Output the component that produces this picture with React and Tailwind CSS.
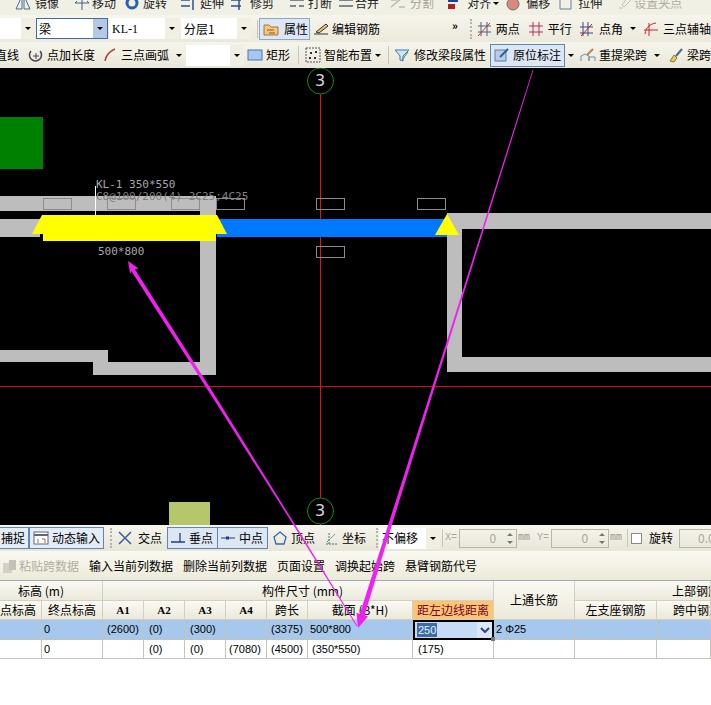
const Ico = ({ children, className = "" }) => (
  <svg viewBox="0 0 16 16" className={`w-4 h-4 shrink-0 ${className}`} fill="none">
    {children}
  </svg>
);

const Arrow = () => (
  <span className="ml-[7px] w-0 h-0 shrink-0 border-x-[3px] border-x-transparent border-t-[3px] border-t-black"></span>
);

const Sep = ({ className = "" }) => <span className={`w-px h-[18px] bg-[#c8c6b6] shrink-0 ${className}`}></span>;

const Grip = ({ className = "" }) => (
  <span className={`w-[2px] h-[20px] shrink-0 border-l-2 border-dotted border-[#b5b3a5] ${className}`}></span>
);

const Combo = ({ className = "", children }) => (
  <div className={`h-[21px] bg-white flex items-center justify-between shrink-0 pl-[3px] ${className}`}>
    <span>{children}</span>
    <span className="w-[14px] h-full bg-[#f1efe4] flex items-center justify-center">
      <span className="w-0 h-0 border-x-[3px] border-x-transparent border-t-[3px] border-t-black"></span>
    </span>
  </div>
);

const Spin = ({ className = "", value }) => (
  <div className={`h-[19px] border border-[#b8b6a6] flex items-center justify-end text-[#a9a798] shrink-0 ${className}`}>
    <span className="mr-[8px]">{value}</span>
    <span className="w-[12px] flex flex-col items-center gap-[5px]">
      <span className="w-0 h-0 border-x-[3px] border-x-transparent border-b-[3px] border-b-[#777]"></span>
      <span className="w-0 h-0 border-x-[3px] border-x-transparent border-t-[3px] border-t-[#777]"></span>
    </span>
  </div>
);

const Cell = ({ className = "", children }) => (
  <div className={`border-r border-b border-[#c4c4bc] flex items-center overflow-hidden whitespace-nowrap ${className}`}>
    {children}
  </div>
);

const Head = ({ className = "", children }) => (
  <div className={`border-r border-b border-[#d2d0c2] bg-gradient-to-b from-[#fafaf3] to-[#ebe9da] flex items-center justify-center overflow-hidden whitespace-nowrap ${className}`}>
    {children}
  </div>
);

const Beam = ({ x, y }) => <rect x={x} y={y} width="28" height="11" fill="none" stroke="#8c8c8c" />;

const Canvas = () => (
  <div className="relative h-[457px] bg-black shrink-0 overflow-hidden font-['DejaVu_Sans_Mono',monospace] text-[11px]">
    <svg viewBox="0 68 711 457" className="w-[711px] h-[457px] block">
      <rect x="0" y="117" width="43" height="52" fill="#008000" />
      <rect x="169" y="502" width="41" height="23" fill="#b5c76a" />
      <g fill="#bdbdbd">
        <rect x="0" y="196" width="216" height="15" />
        <rect x="200" y="211" width="16" height="164" />
        <rect x="0" y="219" width="40" height="18" />
        <rect x="0" y="350" width="108" height="12" />
        <rect x="93" y="362" width="123" height="13" />
        <rect x="447" y="213" width="15" height="159" />
        <rect x="447" y="213" width="264" height="16" />
        <rect x="447" y="357" width="264" height="15" />
      </g>
      <line x1="320.5" y1="68" x2="320.5" y2="525" stroke="#e01020" />
      <line x1="0" y1="386.5" x2="711" y2="386.5" stroke="#d01010" />
      <rect x="217" y="219" width="230" height="18" fill="#0078ff" />
      <polygon points="42,215 217,215 227,234 216,234 216,241 43,241 43,234 32,234" fill="#ffff00" />
      <polygon points="447,214 459,235 435,235" fill="#ffff00" />
      <line x1="95.5" y1="186" x2="95.5" y2="215" stroke="#fff" />
      <Beam x={43.5} y={198.5} />
      <Beam x={107.5} y={198.5} />
      <Beam x={171.5} y={198.5} />
      <Beam x={216.5} y={198.5} />
      <Beam x={316.5} y={198.5} />
      <Beam x={417.5} y={198.5} />
      <Beam x={316.5} y={246.5} />
      <circle cx="320.5" cy="81" r="13" stroke="#128a12" />
      <circle cx="320.5" cy="511" r="13" stroke="#128a12" />
    </svg>
    <span className="absolute left-[315px] top-[5px] text-[16px] font-['DejaVu_Sans',sans-serif] text-[#d8d8d8]">3</span>
    <span className="absolute left-[315px] top-[435px] text-[16px] font-['DejaVu_Sans',sans-serif] text-[#d8d8d8]">3</span>
    <span className="absolute left-[96px] top-[111px] text-[#a8a8a8] whitespace-nowrap">KL-1 350*550</span>
    <span className="absolute left-[96px] top-[123px] text-[#808080] whitespace-nowrap">C8@100/200(4) 2C25;4C25</span>
    <span className="absolute left-[98px] top-[178px] text-[#a8a8a8] whitespace-nowrap">500*800</span>
  </div>
);

export default function App() {
  return (
    <div className="relative w-[711px] h-[705px] overflow-hidden bg-white flex flex-col text-[12px] leading-none text-black font-['Noto_Sans_CJK_SC','Liberation_Sans',sans-serif]">
      {/* top toolbars */}
      <div className="h-[15px] shrink-0 bg-[#f1f0e5] overflow-hidden">
        <div className="h-[11px] flex items-end whitespace-nowrap">
          <div className="flex items-center h-[16px] text-[#222]">
            <Ico className="ml-[15px]"><path d="M7 1 1 14h6zM9 1l6 13H9z" stroke="#4a6a90" /></Ico>
            <span className="ml-[4px]">镜像</span>
            <Ico className="ml-[15px]"><path d="M8 1v14M1 8h14M8 1 6 3M8 1l2 2M1 8l2-2M15 8l-2-2" stroke="#3d5f8a" /></Ico>
            <span className="ml-[2px]">移动</span>
            <Ico className="ml-[8px]"><circle cx="8" cy="8" r="5" stroke="#2a5fb0" strokeWidth="3" /></Ico>
            <span className="ml-[3px]">旋转</span>
            <Ico className="ml-[13px]"><path d="M1 5h9M1 11h9M13 1v14" stroke="#2f4f8f" strokeWidth="1.5" /></Ico>
            <span className="ml-[4px]">延伸</span>
            <Ico className="ml-[6px]"><path d="M1 5h10M1 11h10M9 1v14" stroke="#2f4f8f" strokeWidth="1.5" /></Ico>
            <span className="ml-[4px]">修剪</span>
            <Ico className="ml-[15px]"><path d="M1 5h14M1 11h6M10 11h5M3 1v4M13 1v4" stroke="#55667a" strokeWidth="1.5" /></Ico>
            <span className="ml-[3px]">打断</span>
            <Ico className="ml-[6px]"><path d="M1 5h14M1 11h14M5 1l3 4 3-4" stroke="#55667a" strokeWidth="1.5" /></Ico>
            <span className="ml-[1px]">合并</span>
            <Ico className="ml-[11px]"><path d="M1 12 12 3M1 5h6M9 12h6" stroke="#bcbab0" strokeWidth="1.5" /></Ico>
            <span className="ml-[4px] text-[#a8a69a]">分割</span>
            <Ico className="ml-[12px]"><rect x="2" y="2" width="10" height="5" fill="#1c3fa8" /><rect x="2" y="9" width="7" height="5" fill="#b02020" /></Ico>
            <span className="ml-[5px]">对齐</span>
            <span className="ml-[2px] w-0 h-0 border-x-[3px] border-x-transparent border-t-[3px] border-t-black"></span>
            <Ico className="ml-[6px]"><circle cx="8" cy="9" r="6" fill="#d98a80" stroke="#707070" /></Ico>
            <span className="ml-[5px]">偏移</span>
            <Ico className="ml-[8px]"><path d="M2 14V2h8l3 3v9z" stroke="#6a7f98" /></Ico>
            <span className="ml-[4px]">拉伸</span>
            <Ico className="ml-[15px]"><path d="M2 13h4M11 2l3 3-7 7-2-2z" stroke="#c0beb4" /></Ico>
            <span className="ml-[1px] text-[#b0aea2]">设置夹点</span>
          </div>
        </div>
      </div>

      <div className="h-[27px] shrink-0 bg-gradient-to-b from-[#f6f5ec] to-[#ebe9db] flex items-center whitespace-nowrap">
        <Combo className="w-[35px]"></Combo>
        <div className="ml-[1px] w-[72px] h-[21px] bg-white border border-[#3a6ea5] flex items-center justify-between pl-[2px] shrink-0">
          <span>梁</span>
          <span className="w-[14px] h-full bg-[#b4c8e4] flex items-center justify-center">
            <span className="w-0 h-0 border-x-[3px] border-x-transparent border-t-[3px] border-t-black"></span>
          </span>
        </div>
        <Combo className="ml-[1px] w-[70px] font-['Liberation_Serif',serif]">KL-1</Combo>
        <Combo className="ml-[2px] w-[70px]">分层1</Combo>
        <Sep className="ml-[6px]" />
        <div className="ml-[1px] w-[51px] h-[22px] bg-[#dde7f3] border border-[#8fa8c8] flex items-center shrink-0">
          <Ico className="ml-[3px]"><path d="M1 4h5l2 2h7v8H1z" fill="#f2c879" stroke="#a8743a" /><path d="M4 9h7M6 12h6" stroke="#7a5a2a" /></Ico>
          <span className="ml-[5px]">属性</span>
        </div>
        <Ico className="ml-[3px]"><path d="M1 13h14M3 11 13 3l2 2-9 7z" stroke="#333" fill="#e9c46a" /></Ico>
        <span className="ml-[3px]">编辑钢筋</span>
        <span className="ml-[72px] -mt-[6px] font-bold text-[11px]">»</span>
        <Grip className="ml-[12px]" />
        <Ico className="ml-[4px]"><path d="M2 5h13M2 11h13M5 1v14M11 1v14" stroke="#4d5f80" /><path d="M2 15 14 2" stroke="#c03a20" /></Ico>
        <span className="ml-[4px]">两点</span>
        <Ico className="ml-[8px]"><path d="M1 5h14M1 11h14M5 1v14M11 1v14" stroke="#b03050" /></Ico>
        <span className="ml-[4px]">平行</span>
        <Ico className="ml-[7px]"><path d="M1 6h13M1 12h13M4 1v14M9 1v14" stroke="#3a4a80" /><path d="M2 15 13 3" stroke="#c02020" /></Ico>
        <span className="ml-[4px]">点角</span>
        <Arrow />
        <Ico className="ml-[7px]"><path d="M1 9h14M6 2v13" stroke="#d02020" /><path d="M2 13c1-7 5-10 11-11" stroke="#d02020" /></Ico>
        <span className="ml-[4px]">三点辅轴</span>
      </div>

      <div className="h-[26px] shrink-0 bg-gradient-to-b from-[#f6f5ec] to-[#e9e7d8] flex items-center whitespace-nowrap">
        <span className="-ml-[5px]">直线</span>
        <Ico className="ml-[9px]"><path d="M3 4a6 6 0 1 0 9 0" stroke="#445" strokeWidth="1.5" /><path d="M8 6v6M5 9h6" stroke="#445" /></Ico>
        <span className="ml-[3px]">点加长度</span>
        <Ico className="ml-[7px]"><path d="M3 14C4 8 8 4 13 2" stroke="#b04040" strokeWidth="1.5" /></Ico>
        <span className="ml-[3px]">三点画弧</span>
        <Arrow />
        <Combo className="ml-[4px] w-[58px]"></Combo>
        <Ico className="ml-[3px]"><rect x="1" y="3" width="14" height="10" fill="#a9c6f0" stroke="#4a74b8" /></Ico>
        <span className="ml-[3px]">矩形</span>
        <Sep className="ml-[8px]" />
        <Ico className="ml-[6px]"><rect x="1" y="1" width="14" height="14" stroke="#555" strokeDasharray="2 1" /><path d="M5 5h2v2H5zM10 4h2v2h-2zM4 10h2v2H4zM9 10h2v2H9z" fill="#234" /></Ico>
        <span className="ml-[3px]">智能布置</span>
        <span className="ml-[3px] w-0 h-0 border-x-[3px] border-x-transparent border-t-[3px] border-t-black"></span>
        <Sep className="ml-[7px]" />
        <Ico className="ml-[5px]"><path d="M1 3h14L9 9v5l-3-1V9z" fill="#cfe3f5" stroke="#3d7db0" /><path d="M8 13 14 5" stroke="#4a8a30" /></Ico>
        <span className="ml-[4px]">修改梁段属性</span>
        <div className="ml-[4px] w-[75px] h-[23px] bg-[#dde7f3] border border-[#5f86b5] flex items-center shrink-0">
          <Ico className="ml-[3px]"><rect x="1" y="3" width="11" height="11" fill="#b8cce4" stroke="#5f7fa8" /><path d="M6 10 14 2" stroke="#2a5fa0" strokeWidth="2" /></Ico>
          <span className="ml-[3px]">原位标注</span>
        </div>
        <span className="ml-[3px] w-0 h-0 border-x-[3px] border-x-transparent border-t-[3px] border-t-black"></span>
        <Ico className="ml-[6px]"><path d="M1 14V9l4-2 4 2v5M9 14V10h6v4" stroke="#6a8fb0" /><path d="M7 8l6-6" stroke="#c08050" strokeWidth="2" /></Ico>
        <span className="ml-[3px]">重提梁跨</span>
        <Arrow />
        <Ico className="ml-[8px]"><path d="M2 14l4-6 3 3-3 4z" fill="#e6c85a" stroke="#8a7a30" /><path d="M8 9l6-7" stroke="#4a6a90" strokeWidth="2" /></Ico>
        <span className="ml-[3px]">梁跨数据</span>
      </div>

      <Canvas />

      {/* status toolbar */}
      <div className="h-[26px] shrink-0 bg-gradient-to-b from-[#f6f5ec] to-[#e8e6d8] flex items-center whitespace-nowrap">
        <div className="w-[30px] h-[22px] -ml-[1px] bg-[#e4ecf6] border border-[#5f86b5] flex items-center justify-end pr-[3px] shrink-0 overflow-hidden">
          <span>捕捉</span>
        </div>
        <div className="w-[75px] h-[22px] bg-[#e4ecf6] border border-[#5f86b5] flex items-center shrink-0">
          <Ico className="ml-[3px]"><rect x="1" y="2" width="14" height="12" fill="#fff" stroke="#667" /><path d="M1 5h14" stroke="#667" strokeWidth="2" /><path d="M5 9v4M9 9h3v4" stroke="#a07030" /></Ico>
          <span className="ml-[3px]">动态输入</span>
        </div>
        <Grip className="ml-[6px]" />
        <Ico className="ml-[5px]"><path d="M2 2l12 12M14 2 2 14" stroke="#3a5f95" strokeWidth="1.5" /></Ico>
        <span className="ml-[5px]">交点</span>
        <div className="ml-[5px] w-[51px] h-[22px] bg-[#dde7f3] border border-[#5f86b5] flex items-center shrink-0">
          <Ico className="ml-[2px]"><path d="M1 12h14M10 3v9" stroke="#1f3f85" strokeWidth="1.3" /></Ico>
          <span className="ml-[3px]">垂点</span>
        </div>
        <div className="w-[50px] h-[22px] bg-[#dde7f3] border border-l-0 border-[#5f86b5] flex items-center shrink-0">
          <Ico className="ml-[2px]"><path d="M1 8h14" stroke="#1f3f85" /><rect x="6" y="6.5" width="3" height="3" fill="#1f3f85" /></Ico>
          <span className="ml-[3px]">中点</span>
        </div>
        <Ico className="ml-[4px]"><path d="M8 2l6 5-2 7H4L2 7z" stroke="#2a6ab0" strokeWidth="1.3" /></Ico>
        <span className="ml-[3px]">顶点</span>
        <Ico className="ml-[9px]"><path d="M2 14h12M5 3v11M3 12l8-8" stroke="#3a7a70" strokeDasharray="2 1" /></Ico>
        <span className="ml-[2px]">坐标</span>
        <Grip className="ml-[10px]" />
        <Combo className="ml-[1px] w-[61px]">不偏移</Combo>
        <Sep className="ml-[2px]" />
        <span className="ml-[2px] shrink-0 text-[#a9a798] text-[10px] w-[14px] font-['Liberation_Mono',monospace]">X=</span>
        <Spin className="w-[58px]" value="0" />
        <span className="shrink-0 text-[#999789] text-[10px] w-[20px] pl-px font-['Liberation_Mono',monospace]">mm</span>
        <span className="shrink-0 text-[#a9a798] text-[10px] w-[14px] font-['Liberation_Mono',monospace]">Y=</span>
        <Spin className="w-[58px]" value="0" />
        <span className="shrink-0 text-[#999789] text-[10px] w-[18px] pl-px font-['Liberation_Mono',monospace]">mm</span>
        <Sep />
        <span className="ml-[3px] w-[11px] h-[11px] bg-white border border-[#8a8a80] shrink-0"></span>
        <span className="ml-[7px] shrink-0">旋转</span>
        <div className="ml-[6px] w-[40px] h-[19px] border border-[#b8b6a6] text-[#a9a798] flex items-center pl-[18px] shrink-0">0.0</div>
      </div>

      <div className="h-[30px] shrink-0 pt-px bg-gradient-to-b from-[#fafaf2] to-[#ecead8] flex items-center whitespace-nowrap border-b border-[#9eabb8]">
        <Ico className="ml-[2px]"><rect x="1" y="5" width="9" height="10" fill="#d2d0c6" /><rect x="7" y="2" width="7" height="10" fill="#c4c2b8" /></Ico>
        <span className="ml-[1px] text-[#b0aea2]">粘贴跨数据</span>
        <span className="ml-[10px]">输入当前列数据</span>
        <span className="ml-[10px]">删除当前列数据</span>
        <span className="ml-[10px]">页面设置</span>
        <span className="ml-[10px]">调换起始跨</span>
        <span className="ml-[10px]">悬臂钢筋代号</span>
      </div>

      {/* grid */}
      <div className="grid grid-cols-[42px_61px_41px_41px_41px_41px_41px_105px_81px_81px_82px_54px] grid-rows-[20px_19px_20px_19px] shrink-0">
        <Head className="col-span-2 pr-[20px]">标高 (m)</Head>
        <Head className="col-span-7 justify-start pl-[159px]">构件尺寸 (mm)</Head>
        <Head className="row-span-2">上通长筋</Head>
        <Head className="col-span-2 justify-start pl-[97px]">上部钢筋</Head>

        <Head className="justify-end pr-[5px]">点标高</Head>
        <Head>终点标高</Head>
        <Head className="font-['Liberation_Serif',serif] font-bold text-[11px]">A1</Head>
        <Head className="font-['Liberation_Serif',serif] font-bold text-[11px]">A2</Head>
        <Head className="font-['Liberation_Serif',serif] font-bold text-[11px]">A3</Head>
        <Head className="font-['Liberation_Serif',serif] font-bold text-[11px]">A4</Head>
        <Head>跨长</Head>
        <Head>截面 (B*H)</Head>
        <Head className="bg-none bg-[#fbc66f] text-[#7a0030]">距左边线距离</Head>
        <Head>左支座钢筋</Head>
        <Head className="justify-start pl-[16px]">跨中钢筋</Head>

        <Cell className="bg-[#a6c8ec]"></Cell>
        <Cell className="bg-[#a6c8ec] pl-[2px] font-['Liberation_Sans',sans-serif] text-[11px]">0</Cell>
        <Cell className="bg-[#a6c8ec] pl-[4px] font-['Liberation_Sans',sans-serif] text-[11px]">(2600)</Cell>
        <Cell className="bg-[#a6c8ec] pl-[5px] font-['Liberation_Sans',sans-serif] text-[11px]">(0)</Cell>
        <Cell className="bg-[#a6c8ec] pl-[5px] font-['Liberation_Sans',sans-serif] text-[11px]">(300)</Cell>
        <Cell className="bg-[#a6c8ec]"></Cell>
        <Cell className="bg-[#a6c8ec] pl-[4px] font-['Liberation_Sans',sans-serif] text-[11px]">(3375)</Cell>
        <Cell className="bg-[#a6c8ec] pl-[2px] font-['Liberation_Sans',sans-serif] text-[11px]">500*800</Cell>
        <div className="relative bg-[#c6dbf5] border-2 border-black flex items-center justify-between pl-[2px] font-['Liberation_Sans',sans-serif] text-[11px]">
          <span className="bg-[#3a6ea5] text-[#e8f0fa] px-px h-[14px] flex items-center">250</span>
          <span className="w-[15px] h-full bg-[#dbe7f7] flex items-center justify-center">
            <svg viewBox="0 0 10 6" className="w-[10px] h-[6px]"><path d="M1 1l4 4 4-4" stroke="#2a4a78" strokeWidth="2" fill="none" /></svg>
          </span>
          <span className="absolute -right-[3px] -bottom-[3px] w-[4px] h-[4px] bg-[#777]"></span>
        </div>
        <Cell className="bg-[#a6c8ec] pl-[2px] font-['Liberation_Sans',sans-serif] text-[11px]">2 Φ25</Cell>
        <Cell className="bg-[#a6c8ec]"></Cell>
        <Cell className="bg-[#a6c8ec]"></Cell>

        <Cell></Cell>
        <Cell className="pl-[2px] font-['Liberation_Sans',sans-serif] text-[11px]">0</Cell>
        <Cell></Cell>
        <Cell className="pl-[5px] font-['Liberation_Sans',sans-serif] text-[11px]">(0)</Cell>
        <Cell className="pl-[5px] font-['Liberation_Sans',sans-serif] text-[11px]">(0)</Cell>
        <Cell className="pl-[3px] font-['Liberation_Sans',sans-serif] text-[11px]">(7080)</Cell>
        <Cell className="pl-[4px] font-['Liberation_Sans',sans-serif] text-[11px]">(4500)</Cell>
        <Cell className="pl-[4px] font-['Liberation_Sans',sans-serif] text-[11px]">(350*550)</Cell>
        <Cell className="pl-[5px] font-['Liberation_Sans',sans-serif] text-[11px]">(175)</Cell>
        <Cell></Cell>
        <Cell></Cell>
        <Cell></Cell>
      </div>

      {/* hand-drawn arrows over the screenshot */}
      <svg viewBox="0 0 711 705" className="absolute inset-0 w-[711px] h-[705px] pointer-events-none">
        <polygon points="128,261 138.6,268.6 134.7,268.9 217.3,399.2 290.7,517.6 357.4,625.7 356.6,626.3 289.3,518.4 214.7,400.8 131.3,271.1 130.2,273.8" fill="#f020f0" />
        <polygon points="533.4,70.1 448,344.3 391.7,525.5 364.6,615.3 367.9,616.4 358,628 356.5,612.8 359.8,613.9 388.3,524.5 446,343.7 532.6,69.9" fill="#f020f0" />
      </svg>
    </div>
  );
}
